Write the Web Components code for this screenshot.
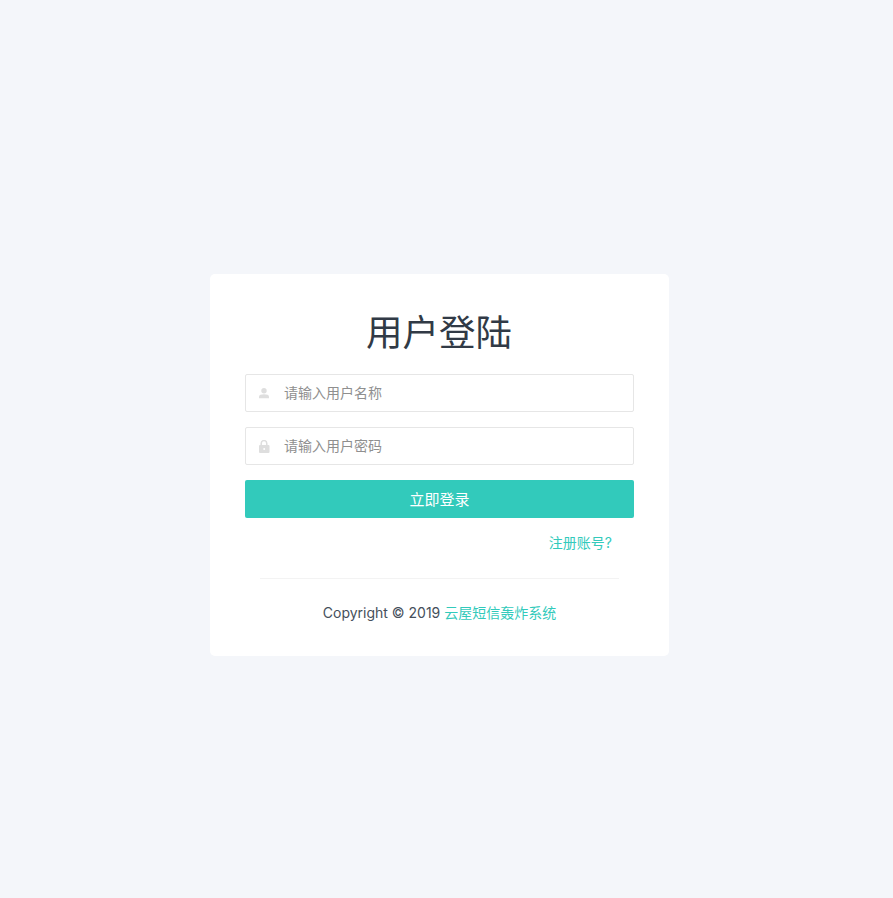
<!DOCTYPE html>
<html lang="zh"><head><meta charset="utf-8"><title>用户登陆</title>
<style>
html,body{margin:0;height:100%;background:#f4f6fa}
body{font-family:Inter,"Noto Sans CJK SC",sans-serif;color:#454f5b}
</style></head><body>
<login-page></login-page>
<script>
const FONT='Inter,"Noto Sans CJK SC",sans-serif';
class LoginField extends HTMLElement{
  connectedCallback(){
    const s=this.attachShadow({mode:'open'});
    s.innerHTML=`<style>
    :host{display:flex;align-items:center;box-sizing:border-box;height:38px;background:#fff;border:1px solid #e6e6e6;border-radius:2px;padding-left:11px;gap:13px}
    .ic{display:flex;width:14px;height:13px;flex:none}
    span{font:14px/1 ${FONT};color:#8f8f8f}
    </style><span class="ic"><slot name="icon"></slot></span><span><slot></slot></span>`;
  }
}
class UserIcon extends HTMLElement{connectedCallback(){this.attachShadow({mode:'open'}).innerHTML=`<style>:host{display:block;width:14px;height:13px}svg{display:block;fill:#dedede}</style><svg width="14" height="13" viewBox="0 0 14 13"><circle cx="7" cy="3.7" r="2.7"/><path d="M2 11.2V9.4C2 7.9 4.2 7.2 7 7.2S12 7.9 12 9.4v1.8z"/></svg>`}}
class LockIcon extends HTMLElement{connectedCallback(){this.attachShadow({mode:'open'}).innerHTML=`<style>:host{display:block;width:14px;height:13px}svg{display:block}</style><svg width="14" height="13" viewBox="0 0 14 13"><path fill="none" stroke="#dedede" stroke-width="1.5" d="M4.2 6V3.4a2.8 2.8 0 0 1 5.6 0V6"/><rect x="2" y="5" width="10.5" height="8" rx="1" fill="#dedede"/><circle cx="7.2" cy="9" r="1" fill="#fff"/></svg>`}}
class LoginPage extends HTMLElement{
  connectedCallback(){
    const s=this.attachShadow({mode:'open'});
    s.innerHTML=`<style>
    :host{display:flex;box-sizing:border-box;height:898px;justify-content:center;padding:274px 14px 0 0;background:#f4f6fa;font-family:${FONT}}
    .card{box-sizing:border-box;width:459px;height:382px;background:#fff;border-radius:5px;padding:35px;display:flex;flex-direction:column}
    h1{margin:0 0 16px;height:51px;padding-right:1px;font:400 36.5px/49px ${FONT};text-align:center;color:#313a46}
    .form{display:flex;flex-direction:column;gap:15px}
    button{height:38px;border:0;border-radius:2px;background:#32cabb;color:#fff;font:15px ${FONT};padding:0 0 2px}
    .reg{align-self:flex-end;margin:15px 22px 0 0;font-size:14px;line-height:20px;color:#32cabb}
    hr{margin:25px 15px 0;border:0;border-top:1px solid #f3f3f3}
    .copy{margin-top:24px;text-align:center;font-size:14px;line-height:20px;color:#454f5b}
    .copy a{color:#32cabb;text-decoration:none}
    </style>
    <div class="card">
      <h1>用户登陆</h1>
      <div class="form">
        <login-field><user-icon slot="icon"></user-icon>请输入用户名称</login-field>
        <login-field><lock-icon slot="icon"></lock-icon>请输入用户密码</login-field>
        <button>立即登录</button>
      </div>
      <a class="reg">注册账号?</a>
      <hr>
      <div class="copy">Copyright © 2019 <a>云屋短信轰炸系统</a></div>
    </div>`;
  }
}
customElements.define('user-icon',UserIcon);
customElements.define('lock-icon',LockIcon);
customElements.define('login-field',LoginField);
customElements.define('login-page',LoginPage);
</script>
</body></html>
